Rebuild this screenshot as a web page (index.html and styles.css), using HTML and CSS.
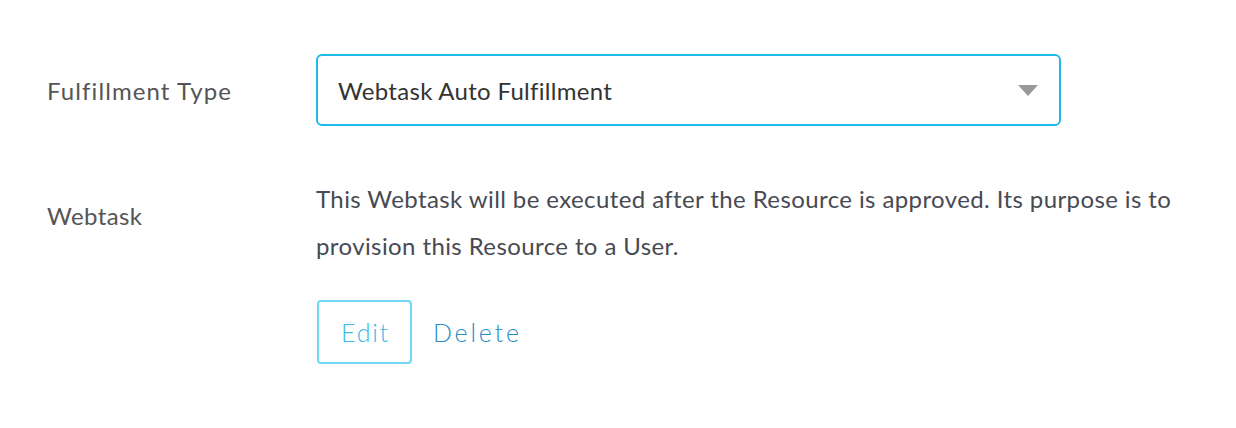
FILE: index.html
```html
<!DOCTYPE html>
<html>
<head>
<meta charset="utf-8">
<link rel="stylesheet" href="styles.css">
</head>
<body>
<div class="form">
  <div class="row row-select">
    <div class="label">Fulfillment Type</div>
    <div class="field">
      <div class="select">
        <span class="select-value">Webtask Auto Fulfillment</span>
        <svg class="caret" width="20" height="11" viewBox="0 0 20 11"><path d="M0 0 L20 0 L10 11 Z" fill="#999"/></svg>
      </div>
    </div>
  </div>
  <div class="row row-webtask">
    <div class="label label-webtask">Webtask</div>
    <div class="field">
      <p class="desc">This Webtask will be executed after the Resource is approved. Its purpose is to provision this Resource to a User.</p>
      <div class="actions">
        <button class="btn-edit">Edit</button>
        <button class="btn-delete">Delete</button>
      </div>
    </div>
  </div>
</div>
</body>
</html>
```

FILE: styles.css
```css
html, body {
  margin: 0;
  padding: 0;
  background: #fff;
}
body {
  font-family: "Lato", "Noto Sans", sans-serif;
  color: #333;
}
.form {
  padding: 54px 0 0 47px;
}
.row {
  display: flex;
}
.label {
  width: 269px;
  flex: none;
  font-size: 24px;
  letter-spacing: 1.1px;
  color: #555;
}
.row-select .label {
  align-self: center;
}
.select {
  box-sizing: border-box;
  width: 745px;
  height: 72px;
  border: 2px solid #1ebbe9;
  border-radius: 6px;
  display: flex;
  align-items: center;
  justify-content: space-between;
  padding: 0 21px 0 20px;
  font-size: 24px;
  letter-spacing: 0.3px;
  color: #333;
}
.caret {
  display: block;
}
.row-webtask {
  margin-top: 49px;
}
.label-webtask {
  padding-top: 26px;
  letter-spacing: 0.4px;
}
.desc {
  margin: 0;
  width: 880px;
  font-size: 24px;
  letter-spacing: 0.4px;
  line-height: 47px;
  color: #474a52;
}
.actions {
  display: flex;
  align-items: center;
  margin-top: 31px;
  gap: 21px;
}
.btn-edit {
  box-sizing: border-box;
  width: 95px;
  height: 64px;
  margin-left: 1px;
  border: 2px solid #6fd8f5;
  border-radius: 4px;
  background: #fff;
  font-family: inherit;
  font-size: 25px;
  font-weight: 300;
  letter-spacing: 1.8px;
  color: #3bb8e3;
  padding: 0 0 0 2px;
}
.btn-delete {
  border: none;
  background: none;
  padding: 0;
  font-family: inherit;
  font-size: 25px;
  font-weight: 300;
  letter-spacing: 2.8px;
  color: #2b8cc4;
}
```
